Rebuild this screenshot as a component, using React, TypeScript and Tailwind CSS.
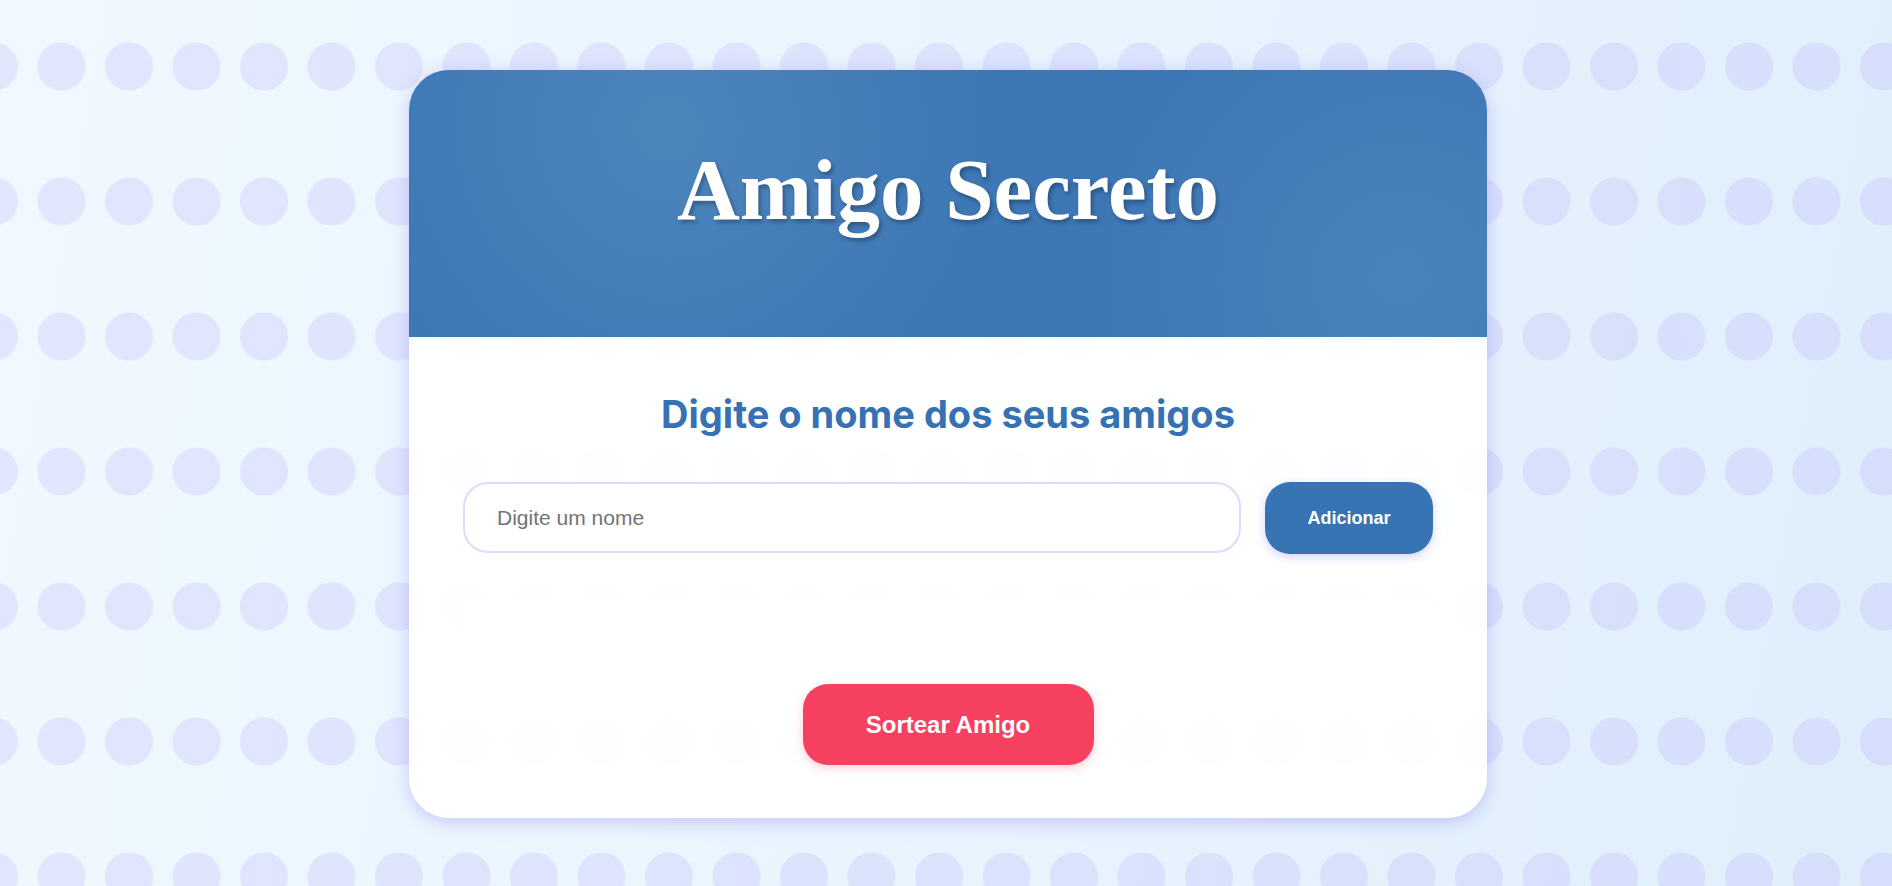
import { useState } from "react";

export default function App() {
  const [nome, setNome] = useState("");
  const [amigos, setAmigos] = useState<string[]>([]);

  const adicionar = () => {
    if (!nome.trim()) return;
    setAmigos([...amigos, nome.trim()]);
    setNome("");
  };

  return (
    <div className="relative min-h-screen w-full overflow-hidden bg-[linear-gradient(100deg,#f0f9ff_0%,#e9f4fe_50%,#e0eefc_100%)] pt-[70px] pb-[68px] pl-[4px]">
      {/* dot pattern */}
      <div className="pointer-events-none absolute inset-0 bg-[radial-gradient(circle,rgba(168,158,248,0.2)_23.5px,transparent_24.5px)] bg-[length:67.5px_135px] bg-[position:27.75px_-1px]" />

      <div className="relative mx-auto flex h-[748px] w-[1078px] flex-col overflow-hidden rounded-[40px] shadow-[0_4px_18px_rgba(140,128,240,0.4)]">
        {/* Header */}
        <div className="flex h-[267px] shrink-0 justify-center bg-[#3d77b5] bg-[radial-gradient(circle_at_24%_22%,rgba(80,136,190,0.85)_0%,transparent_38%),radial-gradient(circle_at_92%_78%,rgba(78,134,190,0.8)_0%,transparent_30%)] pt-[76px]">
          <h1 className="font-['Liberation_Serif',serif] text-[87px] leading-none font-bold text-white [text-shadow:2px_3px_4px_rgba(0,0,0,0.3)]">
            Amigo Secreto
          </h1>
        </div>

        {/* Body */}
        <div className="flex flex-1 flex-col items-center bg-white/95 px-[54px] pt-[55px]">
          <h2 className="font-['Inter',sans-serif] text-[38px] leading-[44px] font-bold text-[#3672b3]">
            Digite o nome dos seus amigos
          </h2>

          <div className="mt-[46px] flex w-full gap-6">
            <input
              value={nome}
              onChange={(e) => setNome(e.target.value)}
              placeholder="Digite um nome"
              className="h-[71px] flex-1 rounded-[25px] border-2 border-[#e1dafc] bg-white px-[32px] font-['Liberation_Sans',Arial,sans-serif] text-[21px] text-[#333] outline-none placeholder:text-[#737373]"
            />
            <button
              onClick={adicionar}
              className="h-[72px] w-[168px] rounded-[25px] bg-[#3774b4] font-['Liberation_Sans',Arial,sans-serif] text-[18px] font-bold text-white shadow-[0_3px_10px_rgba(120,110,230,0.3)]"
            >
              Adicionar
            </button>
          </div>

          <ul className="mt-[44px] flex h-[42px] w-full flex-col rounded-xl bg-white font-['Liberation_Sans',Arial,sans-serif] text-[18px] text-[#333]">
            {amigos.map((a) => (
              <li key={a} className="px-4">
                {a}
              </li>
            ))}
          </ul>

          <button className="mt-[44px] h-[81px] w-[291px] rounded-[25px] bg-[#f5405f] font-['Liberation_Sans',Arial,sans-serif] text-[24px] font-bold text-white shadow-[0_3px_10px_rgba(244,64,95,0.25)]">
            Sortear Amigo
          </button>
        </div>
      </div>
    </div>
  );
}
